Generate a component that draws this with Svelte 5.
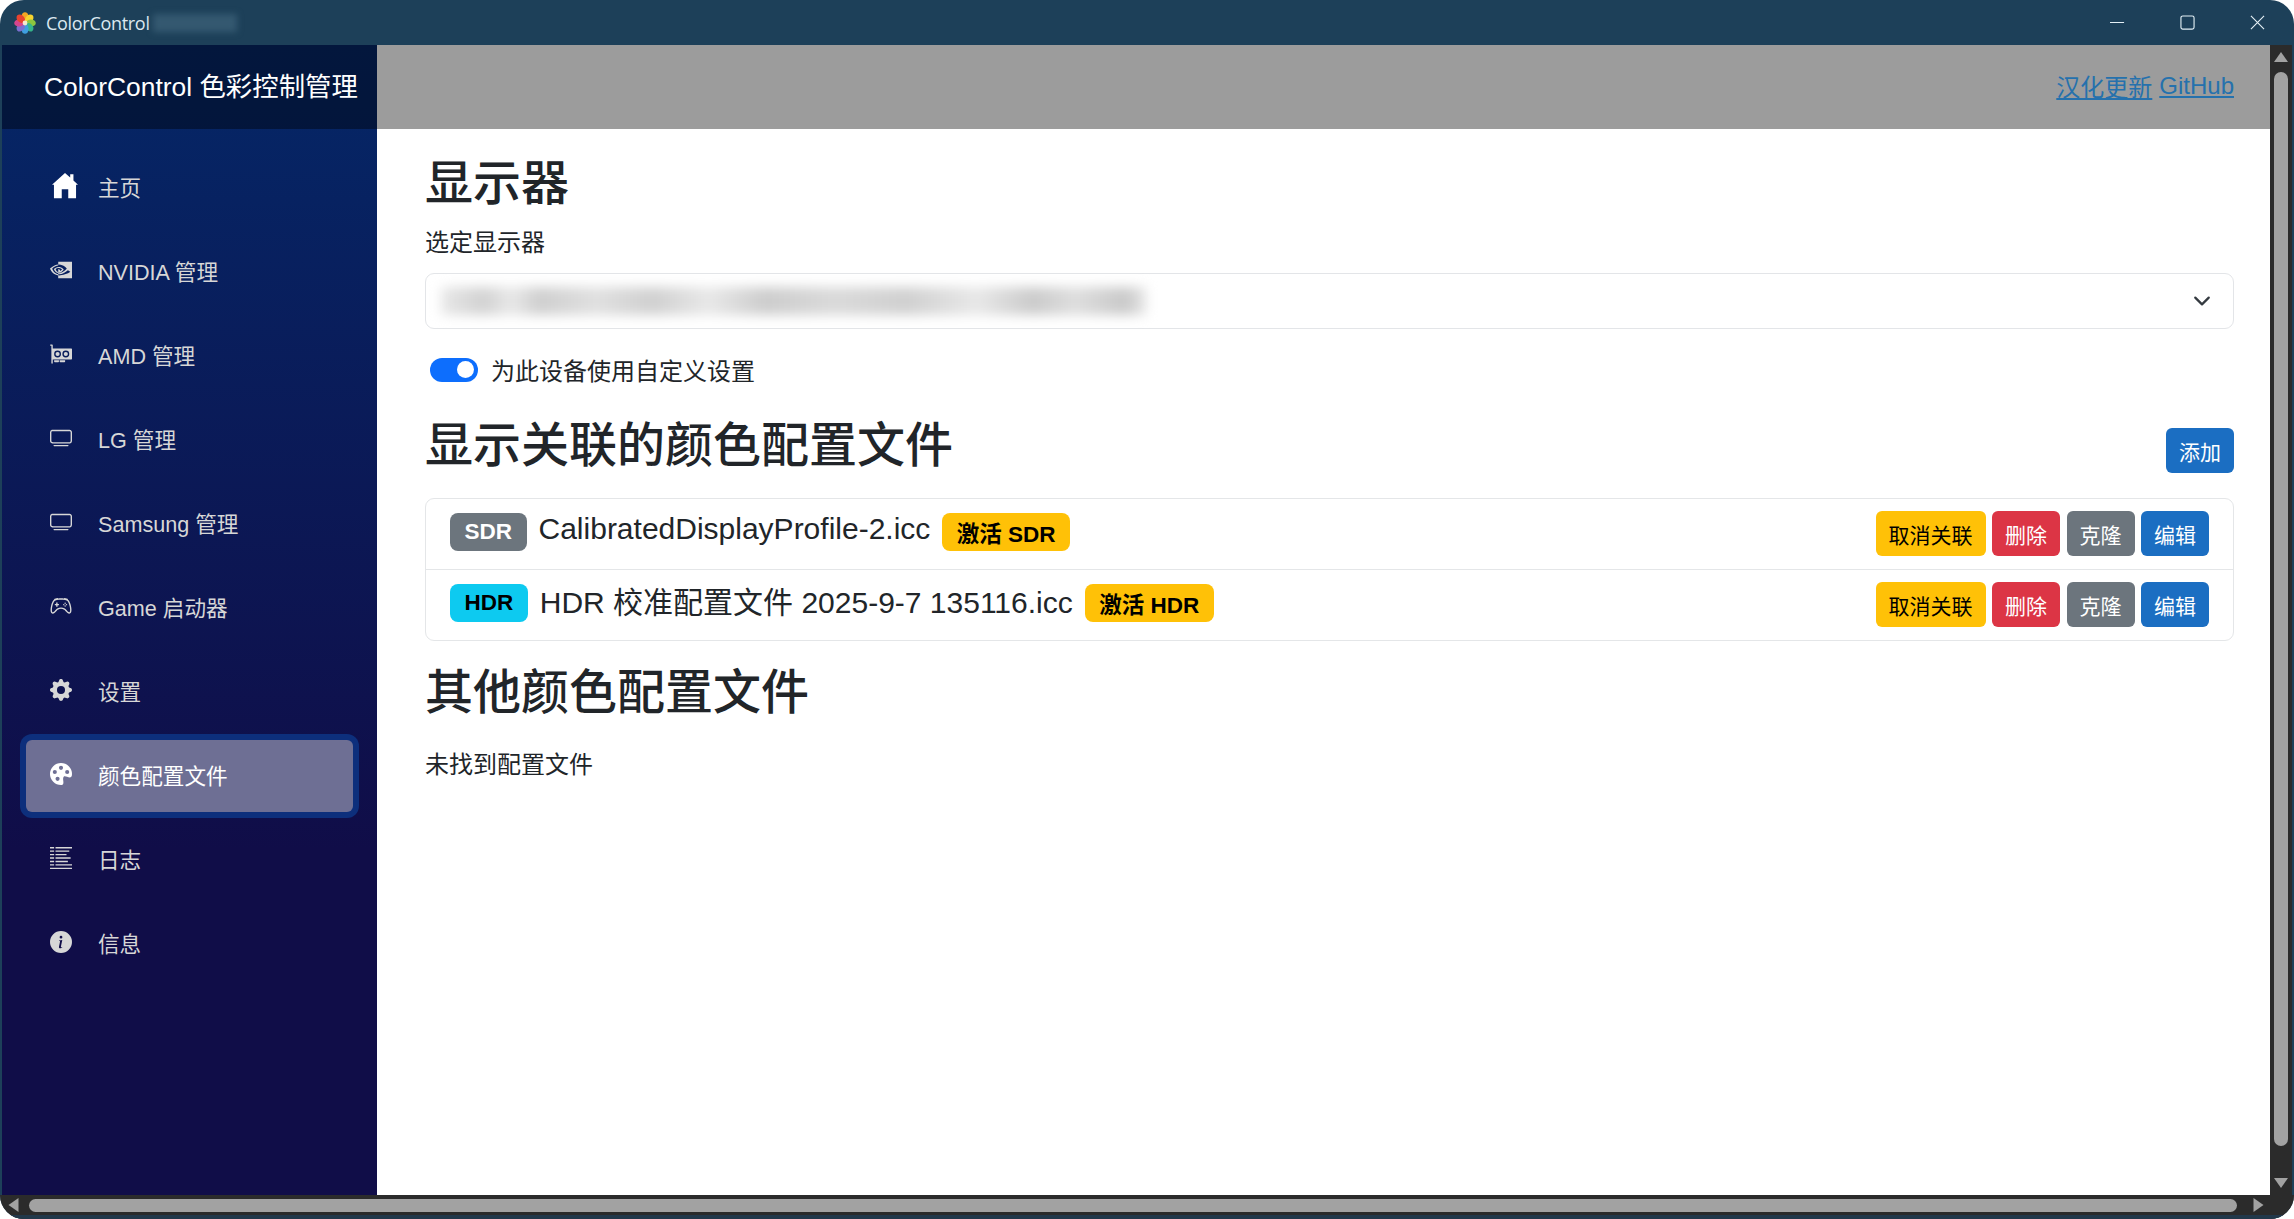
<script>
  const icons = {
    home: ['0 0 8 8', 'M4 0 5.6 1.4V.4h1v1.9L8 3.6h-.6v4.2H5V5H3v2.8H.6V3.6H0Z'],
    nvidia: ['0 0 16 16', 'M1.635 7.146S3.08 5.012 5.97 4.791v-.774C2.77 4.273 0 6.983 0 6.983s1.57 4.536 5.97 4.952v-.824c-3.23-.406-4.335-3.965-4.335-3.965ZM5.97 9.475v.753c-2.44-.435-3.118-2.972-3.118-2.972S4.023 5.958 5.97 5.747v.828h-.004c-1.021-.123-1.82.83-1.82.83s.448 1.607 1.824 2.07ZM6 2l-.03 2.017A7.46 7.46 0 0 1 6.252 4c3.637-.123 6.007 2.983 6.007 2.983s-2.722 3.31-5.557 3.31c-.26 0-.504-.024-.732-.065v.883c.195.025.398.04.61.04 2.638 0 4.546-1.348 6.394-2.943.307.246 1.561.842 1.819 1.104-1.757 1.47-5.852 2.657-8.173 2.657a11.4 11.4 0 0 1-.65-.067V14H16l.03-12H6Zm0 4.575v-.83c.09-.006.18-.012.252-.012 2.276-.071 3.77 1.956 3.77 1.956S8.409 9.97 6.702 9.97c-.246 0-.46-.036-.702-.138V7.317c.875.106 1.051.492 1.577 1.369L8.747 7.7s-.854-1.12-2.294-1.12c-.157 0-.307.012-.453-.005Z'],
    gpu: ['0 0 16 16', 'M4 8a1.5 1.5 0 1 1 3 0 1.5 1.5 0 0 1-3 0Zm7.5-1.5a1.5 1.5 0 1 0 0 3 1.5 1.5 0 0 0 0-3ZM0 1.5A.5.5 0 0 1 .5 1h1a.5.5 0 0 1 .5.5V4h13.5a.5.5 0 0 1 .5.5v7a.5.5 0 0 1-.5.5H2v2.5a.5.5 0 0 1-1 0V2H.5a.5.5 0 0 1-.5-.5Zm5.5 4a2.5 2.5 0 1 0 0 5 2.5 2.5 0 0 0 0-5ZM9 8a2.5 2.5 0 1 0 5 0 2.5 2.5 0 0 0-5 0ZM3 12.5h3.5v1a.5.5 0 0 1-.5.5H3.5a.5.5 0 0 1-.5-.5v-1Zm4 1v-1h4v1a.5.5 0 0 1-.5.5h-3a.5.5 0 0 1-.5-.5Z'],
    tv: ['0 0 16 16', 'M2.5 13.5A.5.5 0 0 1 3 13h10a.5.5 0 0 1 0 1H3a.5.5 0 0 1-.5-.5zM13.991 3l.024.001a1.46 1.46 0 0 1 .538.143.757.757 0 0 1 .302.254c.067.1.145.277.145.602v5.991l-.001.024a1.464 1.464 0 0 1-.143.538.758.758 0 0 1-.254.302c-.1.067-.277.145-.602.145H2.009l-.024-.001a1.464 1.464 0 0 1-.538-.143.758.758 0 0 1-.302-.254C1.078 10.502 1 10.325 1 10V4.009l.001-.024a1.46 1.46 0 0 1 .143-.538.758.758 0 0 1 .254-.302C1.498 3.078 1.675 3 2 3h11.991zM14 2H2C0 2 0 4 0 4v6c0 2 2 2 2 2h12c2 0 2-2 2-2V4c0-2-2-2-2-2z'],
    controller: ['0 0 16 16', 'M11.5 6.027a.5.5 0 1 1-1 0 .5.5 0 0 1 1 0zm-1.5 1.5a.5.5 0 1 0 0-1 .5.5 0 0 0 0 1zm2.5-.5a.5.5 0 1 1-1 0 .5.5 0 0 1 1 0zm-1.5 1.5a.5.5 0 1 0 0-1 .5.5 0 0 0 0 1zm-6.5-3h1v1h1v1h-1v1h-1v-1h-1v-1h1v-1zM3.051 3.26a.5.5 0 0 1 .354-.613l1.932-.518a.5.5 0 0 1 .62.39c.655-.079 1.35-.117 2.043-.117.72 0 1.443.041 2.12.126a.5.5 0 0 1 .622-.399l1.932.518a.5.5 0 0 1 .306.729c.14.09.266.19.373.297.408.408.78 1.05 1.095 1.772.32.733.599 1.591.805 2.466.206.875.34 1.78.364 2.606.024.816-.059 1.602-.328 2.21a1.42 1.42 0 0 1-1.445.83c-.636-.067-1.115-.394-1.513-.773-.245-.232-.496-.526-.739-.808-.126-.148-.25-.292-.368-.423-.728-.804-1.597-1.527-3.224-1.527-1.627 0-2.496.723-3.224 1.527-.119.131-.242.275-.368.423-.243.282-.494.575-.739.808-.398.38-.877.706-1.513.773a1.42 1.42 0 0 1-1.445-.83c-.27-.608-.352-1.395-.329-2.21.024-.826.16-1.73.365-2.606.206-.875.486-1.733.805-2.466.315-.722.687-1.364 1.094-1.772a2.34 2.34 0 0 1 .433-.335.504.504 0 0 1-.028-.079zm2.036.412c-.877.185-1.469.443-1.733.708-.276.276-.587.783-.885 1.465a13.748 13.748 0 0 0-.748 2.295 12.351 12.351 0 0 0-.339 2.406c-.022.755.062 1.368.243 1.776a.42.42 0 0 0 .426.24c.327-.034.61-.199.929-.502.212-.202.4-.423.615-.674.133-.156.276-.323.44-.504C4.861 9.969 5.978 9.027 8 9.027s3.139.942 3.965 1.855c.164.181.307.348.44.504.214.251.403.472.615.674.318.303.601.468.929.503a.42.42 0 0 0 .426-.241c.18-.408.265-1.02.243-1.776a12.354 12.354 0 0 0-.339-2.406 13.753 13.753 0 0 0-.748-2.295c-.298-.682-.61-1.19-.885-1.465-.264-.265-.856-.523-1.733-.708-.85-.179-1.877-.27-2.913-.27-1.036 0-2.063.091-2.913.27z'],
    gear: ['0 0 16 16', 'M9.405 1.05c-.413-1.4-2.397-1.4-2.81 0l-.1.34a1.464 1.464 0 0 1-2.105.872l-.31-.17c-1.283-.698-2.686.705-1.987 1.987l.169.311c.446.82.023 1.841-.872 2.105l-.34.1c-1.4.413-1.4 2.397 0 2.81l.34.1a1.464 1.464 0 0 1 .872 2.105l-.17.31c-.698 1.283.705 2.686 1.987 1.987l.311-.169a1.464 1.464 0 0 1 2.105.872l.1.34c.413 1.4 2.397 1.4 2.81 0l.1-.34a1.464 1.464 0 0 1 2.105-.872l.31.17c1.283.698 2.686-.705 1.987-1.987l-.169-.311a1.464 1.464 0 0 1 .872-2.105l.34-.1c1.4-.413 1.4-2.397 0-2.81l-.34-.1a1.464 1.464 0 0 1-.872-2.105l.17-.31c.698-1.283-.705-2.686-1.987-1.987l-.311.169a1.464 1.464 0 0 1-2.105-.872l-.1-.34zM8 10.93a2.929 2.929 0 1 1 0-5.86 2.929 2.929 0 0 1 0 5.858z'],
    palette: ['0 0 16 16', 'M12.433 10.07C14.133 10.585 16 11.15 16 8a8 8 0 1 0-8 8c1.996 0 1.826-1.504 1.649-3.08-.124-1.101-.252-2.237.351-2.92.465-.527 1.42-.237 2.433.07zM8 5a1.5 1.5 0 1 1 0-3 1.5 1.5 0 0 1 0 3zm4.5 3a1.5 1.5 0 1 1 0-3 1.5 1.5 0 0 1 0 3zM5 6.5a1.5 1.5 0 1 1-3 0 1.5 1.5 0 0 1 3 0zm.5 6.5a1.5 1.5 0 1 1 0-3 1.5 1.5 0 0 1 0 3z'],
    log: ['0 0 16 16', 'M0 0h3v1H0zM4 0h12v1H4zM0 2.5h3v1H0zM4 2.5h10v1H4zM0 5h3v1H0zM4 5h8v1H4zM0 7.5h3v1H0zM4 7.5h11v1H4zM0 10h3v1H0zM4 10h9v1H4zM0 12.5h3v1H0zM4 12.5h12v1H4zM0 15h16v1H0z'],
    info: ['0 0 16 16', 'M8 16A8 8 0 1 0 8 0a8 8 0 0 0 0 16zm.93-9.412-1 4.705c-.07.34.029.533.304.533.194 0 .487-.07.686-.246l-.088.416c-.287.346-.92.598-1.465.598-.703 0-1.002-.422-.808-1.319l.738-3.468c.064-.293.006-.399-.287-.47l-.451-.081.082-.381 2.29-.287zM8 5.5a1 1 0 1 1 0-2 1 1 0 0 1 0 2z']
  };

  const navItems = [
    { label: '主页', icon: 'home' },
    { label: 'NVIDIA 管理', icon: 'nvidia' },
    { label: 'AMD 管理', icon: 'gpu' },
    { label: 'LG 管理', icon: 'tv' },
    { label: 'Samsung 管理', icon: 'tv' },
    { label: 'Game 启动器', icon: 'controller' },
    { label: '设置', icon: 'gear' },
    { label: '颜色配置文件', icon: 'palette', active: true },
    { label: '日志', icon: 'log' },
    { label: '信息', icon: 'info' }
  ];

  const profiles = [
    { kind: 'SDR', name: 'CalibratedDisplayProfile-2.icc' },
    { kind: 'HDR', name: 'HDR 校准配置文件 2025-9-7 135116.icc' }
  ];

  // clockwise from the top of the flower
  const petals = ['#f5a623', '#f7d32e', '#8cc63f', '#35b58a', '#3f9fe0', '#7b6fd0', '#d6458e', '#e8432f'];
</script>

<div class="window">
  <div class="titlebar">
    <svg class="app-logo" viewBox="0 0 22 22">
      {#each petals as color, i}
        <ellipse cx="11" cy="5" rx="3.6" ry="4.8" fill={color} transform="rotate({i * 45} 11 11)" />
      {/each}
      <circle cx="11" cy="11" r="2.4" fill="#f4e9d0" />
    </svg>
    <span class="app-title">ColorControl</span>
    <span class="app-blur"></span>
    <div class="controls">
      <svg viewBox="0 0 16 16"><path d="M0 8h15" /></svg>
      <svg viewBox="0 0 16 16"><rect x="1" y="1" width="14" height="14" rx="2" /></svg>
      <svg viewBox="0 0 16 16"><path d="M1 1l14 14M15 1L1 15" /></svg>
    </div>
  </div>

  <div class="main">
    <div class="sidebar">
      <div class="brand">ColorControl 色彩控制管理</div>
      <nav>
        {#each navItems as item}
          <div class="nav-item">
            <a class="nav-link" class:active={item.active} href="#top">
              <svg class="nav-icon" class:home={item.icon === 'home'} viewBox={icons[item.icon][0]}>
                <path d={icons[item.icon][1]} />
              </svg>
              <span class="nav-text">{item.label}</span>
            </a>
          </div>
        {/each}
      </nav>
    </div>

    <div class="content">
      <div class="top-row">
        <a href="#top">汉化更新</a>
        <a href="#top">GitHub</a>
      </div>
      <div class="article">
        <h2 class="first">显示器</h2>
        <div class="label">选定显示器</div>
        <div class="select">
          <span class="blurred"></span>
          <svg viewBox="0 0 16 16"><path d="M2 5l6 6 6-6" /></svg>
        </div>
        <div class="switch-row">
          <span class="switch"><span class="knob"></span></span>
          <span>为此设备使用自定义设置</span>
        </div>
        <div class="heading-row">
          <h2>显示关联的颜色配置文件</h2>
          <button class="btn primary">添加</button>
        </div>
        <ul class="list">
          {#each profiles as p}
            <li>
              <span class="badge" class:sdr={p.kind === 'SDR'} class:hdr={p.kind === 'HDR'}>{p.kind}</span>
              <span class="file">{p.name}</span>
              <span class="badge warn">激活 {p.kind}</span>
              <span class="actions">
                <button class="btn warning">取消关联</button>
                <button class="btn danger">删除</button>
                <button class="btn secondary">克隆</button>
                <button class="btn primary">编辑</button>
              </span>
            </li>
          {/each}
        </ul>
        <h2 class="other">其他颜色配置文件</h2>
        <div class="empty">未找到配置文件</div>
      </div>
    </div>

    <div class="vscroll">
      <svg class="arrow" viewBox="0 0 14 10"><path d="M7 0l7 10H0z" /></svg>
      <div class="vthumb"></div>
      <svg class="arrow" viewBox="0 0 14 10"><path d="M0 0h14L7 10z" /></svg>
    </div>
  </div>

  <div class="hscroll">
    <svg class="arrow" viewBox="0 0 10 14"><path d="M10 0v14L0 7z" /></svg>
    <div class="hthumb"></div>
    <svg class="arrow" viewBox="0 0 10 14"><path d="M0 0l10 7-10 7z" /></svg>
  </div>
</div>

<style>
  :global(body) {
    margin: 0;
    background: #fff;
    font-family: "Liberation Sans", "Noto Sans CJK SC", sans-serif;
    color: #212529;
  }

  .window {
    width: 2294px;
    height: 1219px;
    display: flex;
    flex-direction: column;
    overflow: hidden;
    border-radius: 24px;
    background: #1d4059;
  }

  .titlebar {
    height: 45px;
    flex: none;
    display: flex;
    align-items: center;
    padding-left: 14px;
    box-sizing: border-box;
    color: #dbe8f0;
  }

  .app-logo {
    width: 22px;
    height: 22px;
    margin-right: 10px;
  }

  .app-title {
    font-family: "Open Sans", sans-serif;
    font-size: 18px;
    letter-spacing: -0.3px;
  }

  .app-blur {
    width: 84px;
    height: 18px;
    margin-left: 3px;
    background: #345870;
    filter: blur(3px);
  }

  .controls {
    margin-left: auto;
    display: flex;
    gap: 55px;
    padding-right: 29px;
  }

  .controls svg {
    width: 15px;
    height: 15px;
    fill: none;
    stroke: #e4f0f6;
    stroke-width: 1.2;
  }

  .main {
    flex: 1;
    min-height: 0;
    display: flex;
    margin-left: 2px;
  }

  .sidebar {
    width: 375px;
    flex: none;
    background: linear-gradient(180deg, #052767 0%, #100d48 70%, #100d48 100%);
  }

  .brand {
    height: 84px;
    display: flex;
    align-items: center;
    padding: 0 0 5px 42px;
    box-sizing: border-box;
    background: rgba(0, 0, 0, 0.4);
    color: #fff;
    font-size: 26.4px;
  }

  nav {
    padding-top: 17px;
  }

  .nav-item {
    height: 84px;
    padding: 6px 24px;
    box-sizing: border-box;
  }

  .nav-link {
    height: 72px;
    display: flex;
    align-items: center;
    padding-left: 24px;
    box-sizing: border-box;
    border-radius: 6px;
    color: #d7d7d7;
    font-size: 21.6px;
    text-decoration: none;
  }

  .nav-text {
    margin-bottom: 3px;
  }

  .nav-link.active {
    background: #6e6f94;
    color: #fff;
    box-shadow: 0 0 0 6px #0d2f7c;
  }

  .nav-icon {
    width: 22px;
    height: 22px;
    flex: none;
    margin-right: 26px;
    margin-top: -5px;
    fill: currentColor;
  }

  .nav-icon.home {
    width: 26px;
    height: 26px;
    margin-left: 2px;
    margin-right: 20px;
    fill: #fff;
  }

  .nav-link.active .nav-icon {
    fill: #fff;
  }

  .content {
    flex: 1;
    min-width: 0;
    display: flex;
    flex-direction: column;
    background: #fff;
  }

  .top-row {
    height: 84px;
    flex: none;
    display: flex;
    align-items: center;
    justify-content: flex-end;
    gap: 7px;
    padding: 0 36px 3px 0;
    box-sizing: border-box;
    background: #9c9c9c;
    font-size: 24px;
  }

  .top-row a {
    color: #2571ad;
  }

  .article {
    padding: 0 36px 0 48px;
  }

  h2 {
    margin: 0;
    font-size: 48px;
    font-weight: 500;
    line-height: 1.2;
  }

  h2.first {
    padding-top: 26px;
  }

  .label {
    margin-top: 12px;
    font-size: 24px;
    line-height: 36px;
  }

  .select {
    height: 56px;
    margin-top: 12px;
    box-sizing: border-box;
    display: flex;
    align-items: center;
    justify-content: space-between;
    padding: 0 22px 0 15px;
    border: 1px solid #e3e5e8;
    border-radius: 9px;
  }

  .blurred {
    width: 705px;
    height: 28px;
    background: linear-gradient(90deg, #e8e8e8 0, #d2d2d2 6%, #e8e8e8 10%, #cfcfcf 14%, #e0e0e0 22%, #d0d0d0 30%, #e8e8e8 38%, #cdcdcd 46%, #dadada 56%, #d0d0d0 66%, #e8e8e8 76%, #cbcbcb 84%, #dedede 90%, #c9c9c9 97%, #e6e6e6 100%);
    filter: blur(6px);
  }

  .select svg {
    width: 18px;
    height: 18px;
    fill: none;
    stroke: #343a40;
    stroke-width: 2;
    stroke-linecap: round;
    stroke-linejoin: round;
  }

  .switch-row {
    display: flex;
    align-items: center;
    gap: 13px;
    height: 24px;
    margin-top: 29px;
    padding-left: 5px;
    font-size: 24px;
  }

  .switch {
    width: 48px;
    height: 24px;
    border-radius: 12px;
    background: #0d6efd;
    display: flex;
    align-items: center;
    justify-content: flex-end;
    padding-right: 4px;
    box-sizing: border-box;
  }

  .knob {
    width: 17px;
    height: 17px;
    border-radius: 50%;
    background: #fff;
  }

  .heading-row {
    display: flex;
    align-items: center;
    justify-content: space-between;
    margin-top: 38px;
    height: 60px;
  }

  .heading-row h2 {
    margin-bottom: 8px;
  }

  .btn {
    height: 45px;
    padding: 0 13px;
    border: none;
    border-radius: 6px;
    font-family: inherit;
    font-size: 21px;
    white-space: nowrap;
  }

  .primary { background: #1b6ec2; color: #fff; }
  .warning { background: #ffc107; color: #000; }
  .danger { background: #dc3545; color: #fff; }
  .secondary { background: #6c757d; color: #fff; }

  .heading-row .btn {
    width: 68px;
    margin-top: 2px;
  }

  .list {
    list-style: none;
    margin: 18px 0 0;
    padding: 0;
    border: 1px solid #e4e6e8;
    border-radius: 9px;
  }

  .list li {
    height: 70.5px;
    box-sizing: border-box;
    display: flex;
    align-items: center;
    padding: 0 24px;
  }

  .list li + li {
    border-top: 1px solid #e4e6e8;
  }

  .badge {
    height: 38px;
    display: inline-flex;
    align-items: center;
    justify-content: center;
    padding: 0 14.5px;
    margin-bottom: 3px;
    border-radius: 8px;
    font-size: 22.5px;
    font-weight: 700;
    box-sizing: border-box;
  }

  .sdr { background: #6c757d; color: #fff; }
  .hdr { background: #0dcaf0; color: #000; }
  .warn { background: #ffc107; color: #000; margin-left: 12px; }

  .file {
    margin-left: 12px;
    margin-bottom: 10px;
    font-size: 30px;
    white-space: nowrap;
  }

  .actions {
    margin-left: auto;
    display: flex;
    gap: 6.5px;
  }

  .actions .btn {
    width: 68px;
    padding: 0;
  }

  .actions .warning {
    width: 110px;
  }

  .other {
    margin-top: 23px;
  }

  .empty {
    margin-top: 24px;
    font-size: 24px;
  }

  .vscroll {
    width: 22px;
    flex: none;
    margin-right: 2px;
    background: #2b2b2b;
    display: flex;
    flex-direction: column;
    align-items: center;
    padding: 7px 0;
    box-sizing: border-box;
    gap: 10px;
  }

  .vscroll .arrow {
    width: 14px;
    height: 10px;
    flex: none;
    fill: #a2a2a2;
  }

  .vthumb {
    flex: 1;
    width: 14px;
    border-radius: 7px;
    background: #a2a2a2;
    margin-bottom: 22px;
  }

  .hscroll {
    height: 24px;
    flex: none;
    box-sizing: border-box;
    background: #2b2b2b;
    border-bottom: 4px solid #22384a;
    display: flex;
    align-items: center;
    padding: 0 30px 0 8px;
    gap: 10px;
  }

  .hscroll .arrow {
    width: 11px;
    height: 14px;
    flex: none;
    fill: #a2a2a2;
  }

  .hthumb {
    flex: 1;
    height: 13px;
    border-radius: 7px;
    background: #a2a2a2;
    margin-right: 6px;
  }
</style>
